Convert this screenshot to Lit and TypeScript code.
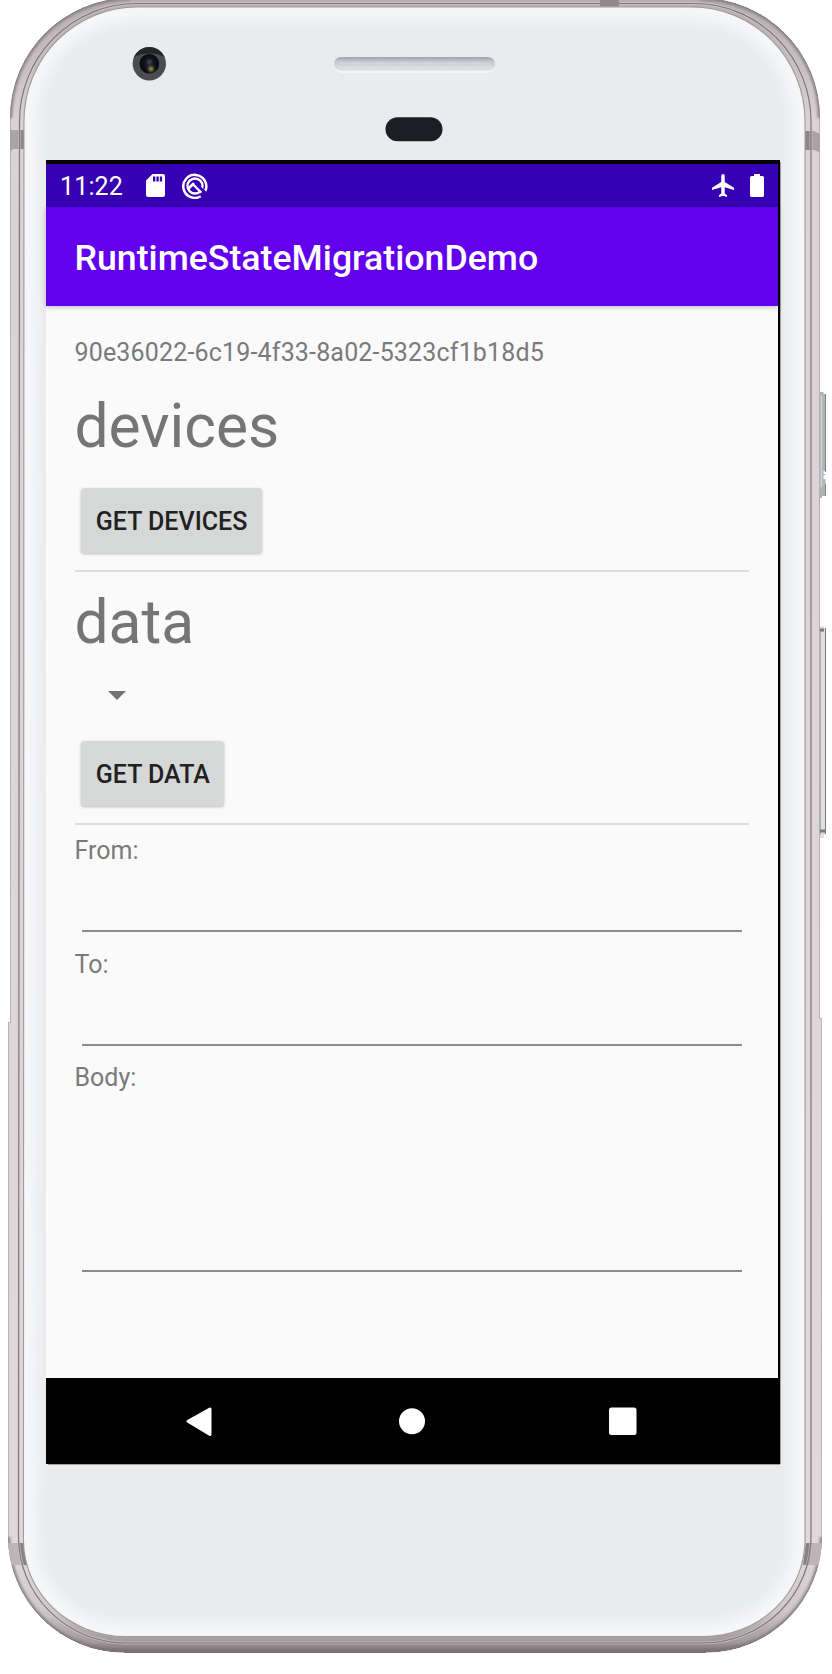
import { LitElement, html, css } from "lit";
import { customElement, property } from "lit/decorators.js";

const OUTER =
  "M10 118A120 120 0 0 1 130 -2H700A120 120 0 0 1 820 118V1018H822V1537A116 116 0 0 1 706 1652.5H124A116 116 0 0 1 8 1537V1022H10Z";
const MIDDLE =
  "M19.5 122A117 118 0 0 1 136.5 3.5H694A117 118 0 0 1 811 122V1537A108 106 0 0 1 703 1643H127A108 106 0 0 1 18.5 1537Z";
const GLASS =
  "M24.5 121A113 113.5 0 0 1 138 7.5H691A113 113.5 0 0 1 804.5 121V1540A101 96 0 0 1 703 1636H126A102 96 0 0 1 24 1540Z";

@customElement("device-frame")
export class DeviceFrame extends LitElement {
  static styles = css`
    :host { display: block; width: 832px; height: 1674px; }
    svg { display: block; }
  `;

  render() {
    return html`<svg width="832" height="1674" viewBox="0 0 832 1674" aria-hidden="true">
      <defs>
        <linearGradient id="rail" x1="0" y1="0" x2="0" y2="1">
          <stop offset="0" stop-color="#b5adb1" />
          <stop offset=".035" stop-color="#c4bcc0" />
          <stop offset=".075" stop-color="#dad3d6" />
          <stop offset=".94" stop-color="#dfd9dc" />
          <stop offset=".975" stop-color="#cfc7ca" />
          <stop offset=".994" stop-color="#a1979c" />
          <stop offset="1" stop-color="#75686f" />
        </linearGradient>
        <linearGradient id="ear" x1="0" y1="0" x2="0" y2="1">
          <stop offset="0" stop-color="#a2a4ae" />
          <stop offset=".35" stop-color="#c8cad1" />
          <stop offset="1" stop-color="#e3e4e8" />
        </linearGradient>
        <radialGradient id="lens">
          <stop offset="0" stop-color="#2c2d47" />
          <stop offset=".45" stop-color="#15151d" />
          <stop offset="1" stop-color="#08080b" />
        </radialGradient>
        <filter id="soft" x="-5%" y="-5%" width="110%" height="110%"><feGaussianBlur stdDeviation="6" /></filter>
        <filter id="blur1" x="-50%" y="-50%" width="200%" height="200%"><feGaussianBlur stdDeviation="1.2" /></filter>
        <clipPath id="outerClip"><path d=${OUTER} /></clipPath>
        <clipPath id="glassClip"><path d=${GLASS} /></clipPath>
      </defs>

      <path d="M820 392h3.500v2h2v77h-2v3h2v1h-2v4h2v17h-3.500v2h-2z" fill="#aeb3b5" />
      <path d="M821.500 395v92" stroke="#cfd5d8" stroke-width="1.500" />
      <path d="M825.500 394v78M825.500 484v12" stroke="#7f8486" stroke-width="1" />
      <path d="M820 626h4v2h2v207h-2v3h-4z" fill="#dfe2df" />
      <path d="M825.500 628v206M820 628.500v206" stroke="#777b79" stroke-width="1" />
      <path d="M820 630h4M820 831h5" stroke="#777b79" stroke-width="3" />

      <path d=${OUTER} fill="url(#rail)" shape-rendering="crispEdges" />
      <g clip-path="url(#outerClip)">
        <path d=${OUTER} fill="none" stroke="#8f868a" stroke-width="2" opacity=".45" />
        <path d="M10 118A120 120 0 0 1 130 -2M700 -2A120 120 0 0 1 820 118M822 1537A116 116 0 0 1 706 1652.500M124 1652.500A116 116 0 0 1 8 1537"
          fill="none" stroke="#7d7378" stroke-width="5" opacity=".7" filter="url(#blur1)" />
        <path d="M6 130h20v19H14l-6 3z" fill="#aaa3a6" /><path d="M19 130h6v19h-6z" fill="#8d8588" />
        <path d="M804 131h10l8 4v18l-8-3h-10z" fill="#aaa3a6" /><path d="M804 131h7v19h-7z" fill="#8d8588" />
        <path d="M6 1543h20l3 22H6z" fill="#bcb5b8" /><path d="M19 1543h5l4 22h-5z" fill="#898185" />
        <path d="M806 1543h18v22h-20z" fill="#bcb5b8" /><path d="M806 1543h6l-3 22h-6z" fill="#898185" />
      </g>
      <path d=${MIDDLE} fill="none" stroke="#d8d1d4" stroke-width="3" opacity=".55" />
      <path d=${MIDDLE} fill="none" stroke="#7f777a" stroke-width="1.200" />
      <path d="M600 0h19v6.500h-19z" fill="#918a8d" />

      <path d=${GLASS} fill="#eaebed" stroke="#a09a9d" stroke-width="2.200" />
      <g clip-path="url(#glassClip)">
        <path d=${GLASS} fill="none" stroke="#f6f7f8" stroke-width="24" filter="url(#soft)" />
      </g>

      <circle cx="149.300" cy="63.700" r="16.700" fill="#4b4c50" />
      <path d="M134 57a16.700 16.700 0 0 1 30.600 0a24 15 0 0 0 -30.600 0z" fill="#242628" />
      <circle cx="149.300" cy="63.700" r="9.800" fill="url(#lens)" />
      <circle cx="149.500" cy="61.500" r="2" fill="#464b70" filter="url(#blur1)" />
      <circle cx="151" cy="69" r="2.700" fill="#8a8640" filter="url(#blur1)" />

      <rect x="334" y="58" width="161" height="15" rx="7.500" fill="#f4f5f6" />
      <rect x="334" y="57" width="161" height="14" rx="7" fill="url(#ear)" />
      <path d="M340 63.500h150M338 67h154" stroke="#dfe1e6" stroke-width="1.500" stroke-dasharray="1.500 1.500" />
      <rect x="385.500" y="117.300" width="57" height="23.900" rx="12" fill="#1b1e23" />
      <path d="M48 1464.500H780M780.500 162V1464" stroke="#a49e9d" stroke-width="1" />
    </svg>`;
  }
}

@customElement("entry-field")
export class EntryField extends LitElement {
  @property() label = "";
  static styles = css`
    :host { display: flex; flex-direction: column; flex: none; box-sizing: border-box; color: #7a7a7a; }
    .label { font-size: 25px; line-height: 29px; }
    .line { flex: 1; margin: 0 7px; border-bottom: 2px solid #8c8c8c; }
  `;
  render() {
    return html`<div class="label">${this.label}</div><div class="line"></div>`;
  }
}

@customElement("app-root")
export class AppRoot extends LitElement {
  static styles = css`
    :host {
      display: grid; width: 832px; height: 1674px; overflow: hidden;
      background: #fff; font-family: Roboto, "Noto Sans", sans-serif;
    }
    device-frame, .screen { grid-area: 1 / 1; }
    .screen {
      box-sizing: border-box; width: 734px; height: 1304px; margin: 160px 0 0 46px;
      border-top: 4px solid #000; border-right: 2px solid #000;
      display: flex; flex-direction: column; background: #fafafa; z-index: 1;
    }
    .status {
      height: 43px; flex: none; background: #3700b3; color: #fff; display: flex;
      align-items: center; padding: 0 14px 0 14px; font-size: 25px;
    }
    .clock { width: 86px; padding-top: 2px; letter-spacing: .15px; }
    .status svg { display: block; flex: none; }
    .round { margin-left: 16.500px; }
    .plane { margin-left: auto; }
    .battery { margin-left: 16px; }
    .appbar {
      height: 98.500px; flex: none; background: #6200ee; color: #fff; display: flex;
      align-items: center; padding: 3.500px 28.500px 0; box-sizing: border-box;
      font-size: 35.700px; font-weight: 500; box-shadow: 0 1px 5px rgba(0,0,0,.25);
    }
    .content {
      flex: 1; padding: 32.500px 29px 0 28.500px; display: flex; flex-direction: column;
      align-items: stretch; color: #757575; min-height: 0;
    }
    .content > * { flex: none; }
    .uuid { font-size: 25px; line-height: 29px; letter-spacing: .17px; color: #7a7a7a; }
    .head { font-size: 60.500px; line-height: 71px; margin-top: 23.500px; }
    .second { margin-top: 15px; }
    .button {
      align-self: flex-start; margin: 26.500px 0 0 6.200px; height: 64.500px; padding: 2px 14.500px 0 15.100px;
      box-sizing: border-box; border: 0; border-radius: 3.500px; background: #d6d7d7; color: #212121;
      font: 500 25px Roboto, sans-serif; box-shadow: 0 1px 3px rgba(0,0,0,.25);
    }
    .data-button { margin-top: 24px; padding: 2px 13.900px 0 15.100px; }
    .rule { height: 2px; margin-top: 17.500px; background: #dcdcdc; }
    .spinner { height: 43px; margin: 16px 0 0 33.500px; display: flex; align-items: center; }
    .from { height: 96px; margin-top: 11px; }
    .to { height: 96.500px; margin-top: 17.500px; }
    .body { height: 208.500px; margin-top: 17px; }
    .nav { height: 86px; flex: none; background: #000; display: block; }
  `;

  render() {
    return html`
      <device-frame></device-frame>
      <main class="screen">
        <div class="status">
          <span class="clock">11:22</span>
          <svg width="19" height="23" viewBox="0 0 19 23">
            <path fill="#fff" d="M6.500 0H17a2 2 0 0 1 2 2v19a2 2 0 0 1-2 2H2a2 2 0 0 1-2-2V6.500z" />
            <path fill="#3700b3" d="M7 2.500h2.300v5H7zM10.400 2.500h2.300v5h-2.300zM13.800 2.500h2.300v5h-2.300z" />
          </svg>
          <svg class="round" width="26" height="26" viewBox="0 0 26 26" fill="none" stroke="#fff">
            <path d="M18.700 23.200A11.500 11.500 0 1 1 23.300 18" stroke-width="2.500" />
            <circle cx="13" cy="13" r="7.500" stroke-width="2.400" />
            <path d="M6.500 15.500L11 11l8.500 8.500" stroke-width="2.600" stroke-linejoin="round" />
            <path d="M13.500 10.300L23.500 20.300" stroke="#3700b3" stroke-width="2.800" />
          </svg>
          <svg class="plane" width="22" height="23" viewBox="2 2 19 20" preserveAspectRatio="none">
            <path fill="#fff" d="M21 16v-2l-8-5V3.500a1.500 1.500 0 0 0-3 0V9l-8 5v2l8-2.500V19l-2 1.500V22l3.500-1 3.500 1v-1.500L13 19v-5.500z" />
          </svg>
          <svg class="battery" width="14" height="23" viewBox="0 0 14 23">
            <path fill="#fff" d="M4 0h6v2h2.500A1.500 1.500 0 0 1 14 3.500v18a1.500 1.500 0 0 1-1.500 1.500h-11A1.500 1.500 0 0 1 0 21.500v-18A1.500 1.500 0 0 1 1.500 2H4z" />
          </svg>
        </div>
        <div class="appbar">RuntimeStateMigrationDemo</div>
        <div class="content">
          <div class="uuid">90e36022-6c19-4f33-8a02-5323cf1b18d5</div>
          <div class="head">devices</div>
          <button class="button">GET DEVICES</button>
          <div class="rule"></div>
          <div class="head second">data</div>
          <div class="spinner">
            <svg width="18" height="9" viewBox="0 0 18 9"><path fill="#737373" d="M0 0h18L9 9z" /></svg>
          </div>
          <button class="button data-button">GET DATA</button>
          <div class="rule"></div>
          <entry-field class="from" label="From:"></entry-field>
          <entry-field class="to" label="To:"></entry-field>
          <entry-field class="body" label="Body:"></entry-field>
        </div>
        <svg class="nav" width="734" height="86" viewBox="0 0 734 86">
          <path fill="#fff" stroke="#fff" stroke-width="3" stroke-linejoin="round" d="M142 43.300L164 31v25.500z" />
          <circle cx="366" cy="43.300" r="13" fill="#fff" />
          <rect x="563" y="29.500" width="27.500" height="27.500" rx="2.500" fill="#fff" />
        </svg>
      </main>
    `;
  }
}
